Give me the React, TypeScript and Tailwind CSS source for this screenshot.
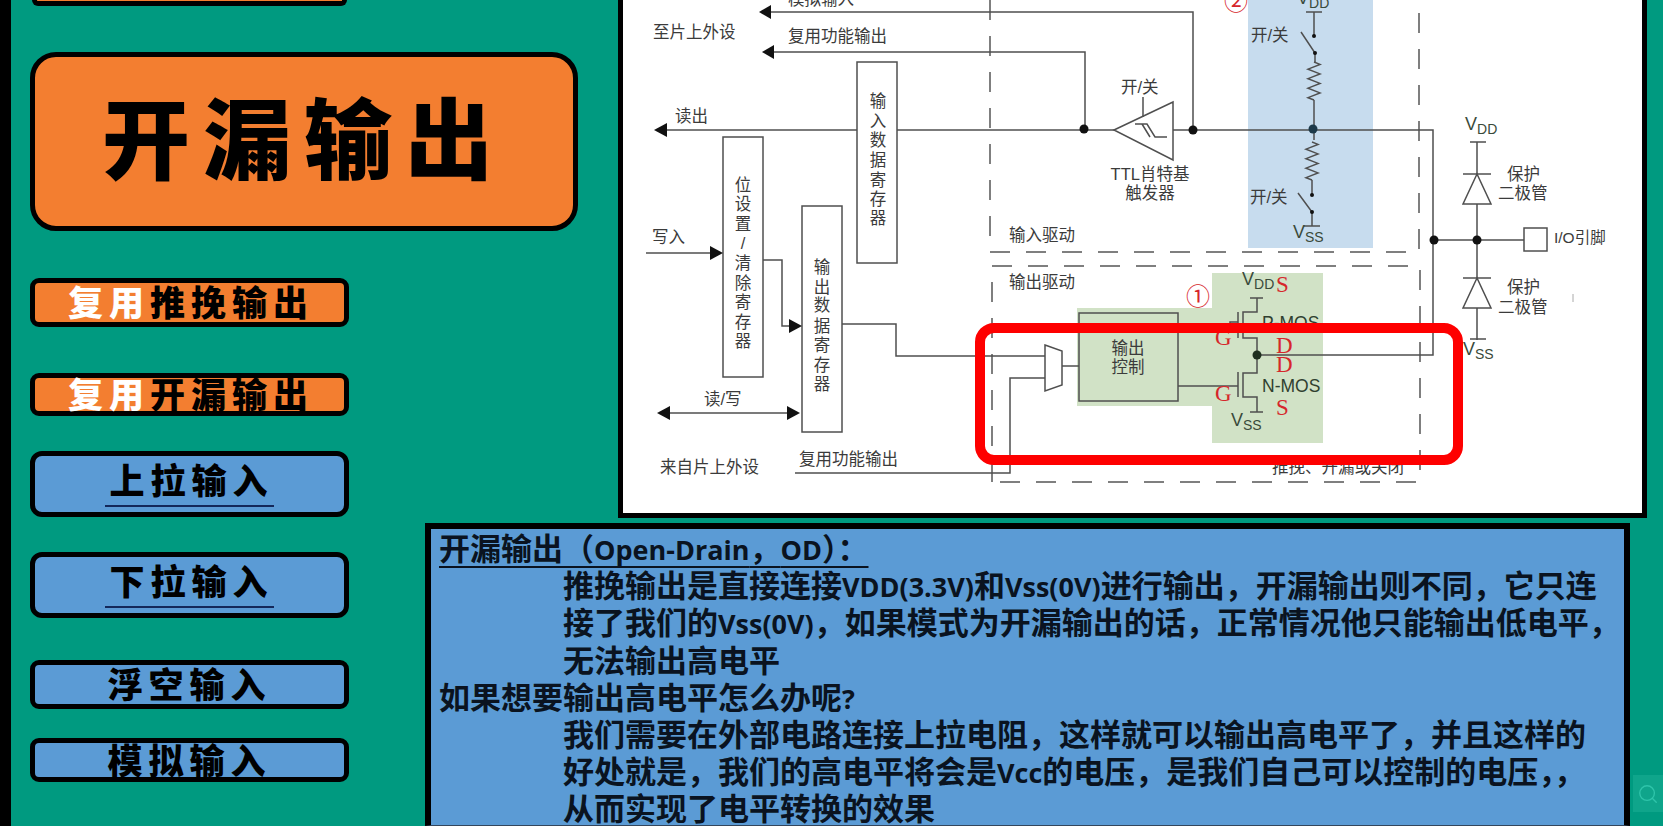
import React from "react";
import { Search } from "lucide-react";

const G = "#4f4f4f";
const TXT = "#3b3b3b";
const RED = "#d6262b";

function T({ x, y, s, size = 16.5, anchor = "start", fill = TXT, serif = false }: { x: number; y: number; s: string; size?: number; anchor?: "start" | "middle"; fill?: string; serif?: boolean }) {
  return (
    <text x={x} y={y} fontSize={size} textAnchor={anchor} dominantBaseline="central" fill={fill} fontFamily={serif ? "'Liberation Serif', serif" : "'Liberation Sans', 'Noto Sans CJK SC', sans-serif"}>
      {s}
    </text>
  );
}

function VSub({ x, y, sub }: { x: number; y: number; sub: string }) {
  return (
    <text x={x} y={y + 6} fontSize={18} fill="#3a4a3a" fontFamily="'Liberation Sans', sans-serif">
      V<tspan dy={4} fontSize={14}>{sub}</tspan>
    </text>
  );
}

function Column({ x, items }: { x: number; items: [string, number][] }) {
  return (
    <>
      {items.map(([c, y], i) => (
        <T key={i} x={x} y={y} s={c} anchor="middle" />
      ))}
    </>
  );
}

function Zig({ x, y0, y1 }: { x: number; y0: number; y1: number }) {
  const n = 8;
  const step = (y1 - y0) / n;
  let d = `M${x} ${y0}`;
  for (let i = 0; i < n; i++) {
    const yy = y0 + step * (i + 0.5);
    d += ` L${x + (i % 2 === 0 ? 6 : -6)} ${yy}`;
  }
  d += ` L${x} ${y1}`;
  return <path d={d} fill="none" stroke={G} strokeWidth={1.5} />;
}

function Dot({ x, y, r = 4.5, fill = "#111" }: { x: number; y: number; r?: number; fill?: string }) {
  return <circle cx={x} cy={y} r={r} fill={fill} />;
}

function Diode({ x, bar, base }: { x: number; bar: number; base: number }) {
  return (
    <>
      <line x1={x - 14} x2={x + 14} y1={bar} y2={bar} stroke={G} strokeWidth={1.5} />
      <polygon points={`${x},${bar} ${x - 14},${base} ${x + 14},${base}`} fill="white" stroke={G} strokeWidth={1.5} />
    </>
  );
}

function Diagram() {
  const dash = "20 16";
  return (
    <svg viewBox="623 0 1019 513" width={1019} height={513} className="block">
      <rect x={1248} y={0} width={125} height={248} fill="#c7dcee" />
      <rect x={1212} y={273} width={111} height={170} fill="#d1e2c6" />
      <rect x={1077} y={308} width={135} height={98} fill="#d1e2c6" />

      <g fill="none" stroke="#555" strokeWidth={1.5}>
        <path d="M990 0 V252 H1419 V0" strokeDasharray={dash} />
        <path d="M992 482 V266 H1420 V482 Z" strokeDasharray={dash} />
      </g>

      <g fill="none" stroke={G} strokeWidth={1.5}>
        <path d="M770 12 H1193 V130" />
        <path d="M773 52 H1085 V130" />
        <path d="M665 130 H857" />
        <path d="M897 130 H1115" />
        <path d="M1173 130 H1433 V355 H1257" />
        <path d="M646 253 H712" />
        <path d="M763 260 H782 V326 H790" />
        <path d="M842 324 H896 V356 H1045" />
        <path d="M668 413 H789" />
        <path d="M795 473 H1010 V378 H1045" />
        <rect x={857} y={62} width={40} height={201} fill="white" />
        <rect x={723} y={137} width={40} height={240} fill="white" />
        <rect x={802} y={206} width={40} height={226} fill="white" />
        <path d="M1114 130 L1173 102 V160 Z" fill="white" />
        <path d="M1143 97 V117" />
        <path d="M1135 124 H1147 L1155 137 H1167 M1142 124 L1150 137" />
        <polygon points="1045,345 1062,351 1062,385 1045,391" fill="white" />
        <path d="M1062 366 H1079" />
        <rect x={1079} y={313} width={99} height={88} />

        <path d="M1306 12 H1322 M1314 12 V36" />
        <path d="M1301 32 L1315 53 V62" />
        <path d="M1314 100 V140" />
        <path d="M1312 180 V195" />
        <path d="M1298 193 L1312 212 V226 M1304 226 H1320" />

        <path d="M1250 298 H1263 M1257 298 V312 H1243 V338 H1257 V373 H1243 V397 H1257 V412 M1250 412 H1263" />
        <path d="M1238 312 V338 M1238 372 V397" />
        <path d="M1238 322 H1230 V330 H1178" />
        <path d="M1178 386 H1238" />

        <path d="M1477 142 V340 M1470 142 H1486 M1470 339 H1486" />
        <path d="M1433 240 H1524" />
        <rect x={1524} y={228} width={23} height={23} fill="white" />
      </g>

      <Zig x={1314} y0={62} y1={100} />
      <Zig x={1312} y0={142} y1={180} />
      <Diode x={1477} bar={174} base={204} />
      <Diode x={1477} bar={278} base={308} />

      <g fill="#111">
        <polygon points="759,12 771,5 771,19" />
        <polygon points="762,52 774,45 774,59" />
        <polygon points="654,130 667,123 667,137" />
        <polygon points="723,253 710,246 710,260" />
        <polygon points="802,326 789,319 789,333" />
        <polygon points="657,413 670,406 670,420" />
        <polygon points="800,413 787,406 787,420" />
      </g>

      <Dot x={1084} y={129} />
      <Dot x={1193} y={130} />
      <Dot x={1313} y={129} fill="#1d3a4a" />
      <Dot x={1314} y={36} r={2} />
      <Dot x={1315} y={53} r={2} />
      <Dot x={1312} y={195} r={2} />
      <Dot x={1312} y={212} r={2} />
      <Dot x={1257} y={355} fill="#1f2f1f" />
      <Dot x={1477} y={240} />
      <Dot x={1434} y={240} />

      <T x={788} y={-1} s="模拟输入" />
      <T x={653} y={32} s="至片上外设" />
      <T x={788} y={36} s="复用功能输出" />
      <T x={675} y={116} s="读出" />
      <T x={652} y={237} s="写入" />
      <T x={704} y={399} s="读/写" />
      <T x={660} y={467} s="来自片上外设" />
      <T x={799} y={459} s="复用功能输出" />
      <Column x={878} items={[["输", 101], ["入", 121], ["数", 140], ["据", 160], ["寄", 180], ["存", 199], ["器", 218]]} />
      <Column x={743} items={[["位", 185], ["设", 204], ["置", 224], ["/", 243], ["清", 263], ["除", 283], ["寄", 302], ["存", 322], ["器", 341]]} />
      <Column x={822} items={[["输", 267], ["出", 287], ["数", 305], ["据", 326], ["寄", 345], ["存", 365], ["器", 384]]} />
      <T x={1121} y={87} s="开/关" />
      <T x={1251} y={35} s="开/关" />
      <T x={1250} y={197} s="开/关" />
      <T x={1150} y={174} s="TTL肖特基" anchor="middle" />
      <T x={1150} y={193} s="触发器" anchor="middle" />
      <T x={1009} y={235} s="输入驱动" />
      <T x={1009} y={282} s="输出驱动" />
      <T x={1128} y={348} s="输出" anchor="middle" />
      <T x={1128} y={367} s="控制" anchor="middle" />
      <T x={1507} y={174} s="保护" />
      <T x={1498} y={193} s="二极管" />
      <T x={1507} y={287} s="保护" />
      <T x={1498} y={307} s="二极管" />
      <T x={1554} y={237} s="I/O引脚" size={15.5} />
      <T x={1272} y={467} s="推挽、开漏或关闭" />
      <line x1={1573} x2={1573} y1={294} y2={302} stroke="#aaa" strokeWidth={1} />

      <T x={1236} y={1} s="②" size={24} fill={RED} anchor="middle" />
      <T x={1198} y={296} s="①" size={24} fill={RED} anchor="middle" />

      <VSub x={1297} y={-2} sub="DD" />
      <VSub x={1293} y={232} sub="SS" />
      <VSub x={1242} y={279} sub="DD" />
      <VSub x={1231} y={420} sub="SS" />
      <VSub x={1465} y={124} sub="DD" />
      <VSub x={1463} y={349} sub="SS" />

      <T x={1262} y={323} s="P-MOS" size={17.5} fill="#2f3f2f" />
      <T x={1262} y={386} s="N-MOS" size={17.5} fill="#2f3f2f" />
      <T x={1276} y={284} s="S" size={23} fill={RED} serif />
      <T x={1276} y={345} s="D" size={23} fill={RED} serif />
      <T x={1276} y={364} s="D" size={23} fill={RED} serif />
      <T x={1276} y={407} s="S" size={23} fill={RED} serif />
      <T x={1215} y={337} s="G" size={23} fill={RED} serif />
      <T x={1215} y={393} s="G" size={23} fill={RED} serif />

      <rect x={980} y={328} width={478} height={132} rx={14} fill="none" stroke="#fe0000" strokeWidth={10} />
    </svg>
  );
}

const line = "h-[37.2px] whitespace-nowrap";
const indent = "h-[37.2px] whitespace-nowrap pl-[124px]";

const cardBase = "flex items-center justify-center w-[319px] border-[5px] border-black text-[35px] font-black leading-none tracking-[6px] text-black";

function L({ children }: { children: React.ReactNode }) {
  return <span className="font-['Open_Sans',sans-serif] text-[27px] font-bold">{children}</span>;
}

export default function App() {
  return (
    <div className="flex h-[826px] w-[1663px] overflow-hidden bg-[#009a80] font-['Noto_Sans_CJK_SC',sans-serif]">
      <div className="h-full w-[11px] shrink-0 bg-black" />

      <div className="h-full w-[414px] shrink-0 pl-[19px]">
        <div className="ml-[2px] h-[6px] w-[315px] rounded-b-[8px] border-[5px] border-t-0 border-black bg-[#f37e30]" />
        <div className="mt-[46px] flex h-[179px] w-[548px] items-center justify-center rounded-[26px] border-[5px] border-black bg-[#f37e30] pb-[16px] text-[88px] font-black leading-none tracking-[13px] text-black">
          开漏输出
        </div>
        <div className={`${cardBase} mt-[47px] h-[49px] rounded-[9px] bg-[#f37e30] pb-[4px] pl-[3px]`}>
          <span className="text-white">复用</span>推挽输出
        </div>
        <div className={`${cardBase} mt-[46px] h-[43px] rounded-[9px] bg-[#f37e30] pb-[5px] pl-[3px]`}>
          <span className="text-white">复用</span>开漏输出
        </div>
        <div className={`${cardBase} mt-[35px] h-[66px] rounded-[12px] bg-[#5b9bd5]`}>
          <span className="border-b-[2px] border-[#14285a] pb-[9px] pl-[4px]">上拉输入</span>
        </div>
        <div className={`${cardBase} mt-[35px] h-[66px] rounded-[12px] bg-[#5b9bd5]`}>
          <span className="border-b-[2px] border-[#14285a] pb-[9px] pl-[4px]">下拉输入</span>
        </div>
        <div className={`${cardBase} mt-[42px] h-[49px] rounded-[9px] bg-[#5b9bd5] pb-[5px]`}>浮空输入</div>
        <div className={`${cardBase} mt-[29px] h-[44px] rounded-[9px] bg-[#5b9bd5] pb-[4px]`}>模拟输入</div>
      </div>

      <div className="relative h-full flex-1">
        <div className="ml-[193px] h-[518px] w-[1029px] border-[5px] border-t-0 border-black bg-white">
          <Diagram />
        </div>
        <div className="mt-[5px] h-[303px] w-[1205px] border-[6px] border-b-[1px] border-black border-b-[#33465c] bg-[#5b9bd5] pl-[8px] text-[31px] font-bold leading-[36px] text-[#0a1320]">
          <div className={line}>
            <span className="underline decoration-[2px] underline-offset-[6px]">开漏输出（<L>Open-Drain</L>，<L>OD</L>）：</span>
          </div>
          <div className={indent}>推挽输出是直接连接<L>VDD(3.3V)</L>和<L>Vss(0V)</L>进行输出，开漏输出则不同，它只连</div>
          <div className={indent}>接了我们的<L>Vss(0V)</L>，如果模式为开漏输出的话，正常情况他只能输出低电平，</div>
          <div className={indent}>无法输出高电平</div>
          <div className={line}>如果想要输出高电平怎么办呢<L>?</L></div>
          <div className={indent}>我们需要在外部电路连接上拉电阻，这样就可以输出高电平了，并且这样的</div>
          <div className={indent}>好处就是，我们的高电平将会是<L>Vcc</L>的电压，是我们自己可以控制的电压，，</div>
          <div className={indent}>从而实现了电平转换的效果</div>
        </div>
        <div className="absolute bottom-[14px] right-0 flex h-[37px] w-[30px] items-center justify-center bg-[#0fa58b]">
          <Search className="h-[22px] w-[22px] text-[#2fc4aa]" strokeWidth={1.5} />
        </div>
      </div>
    </div>
  );
}
